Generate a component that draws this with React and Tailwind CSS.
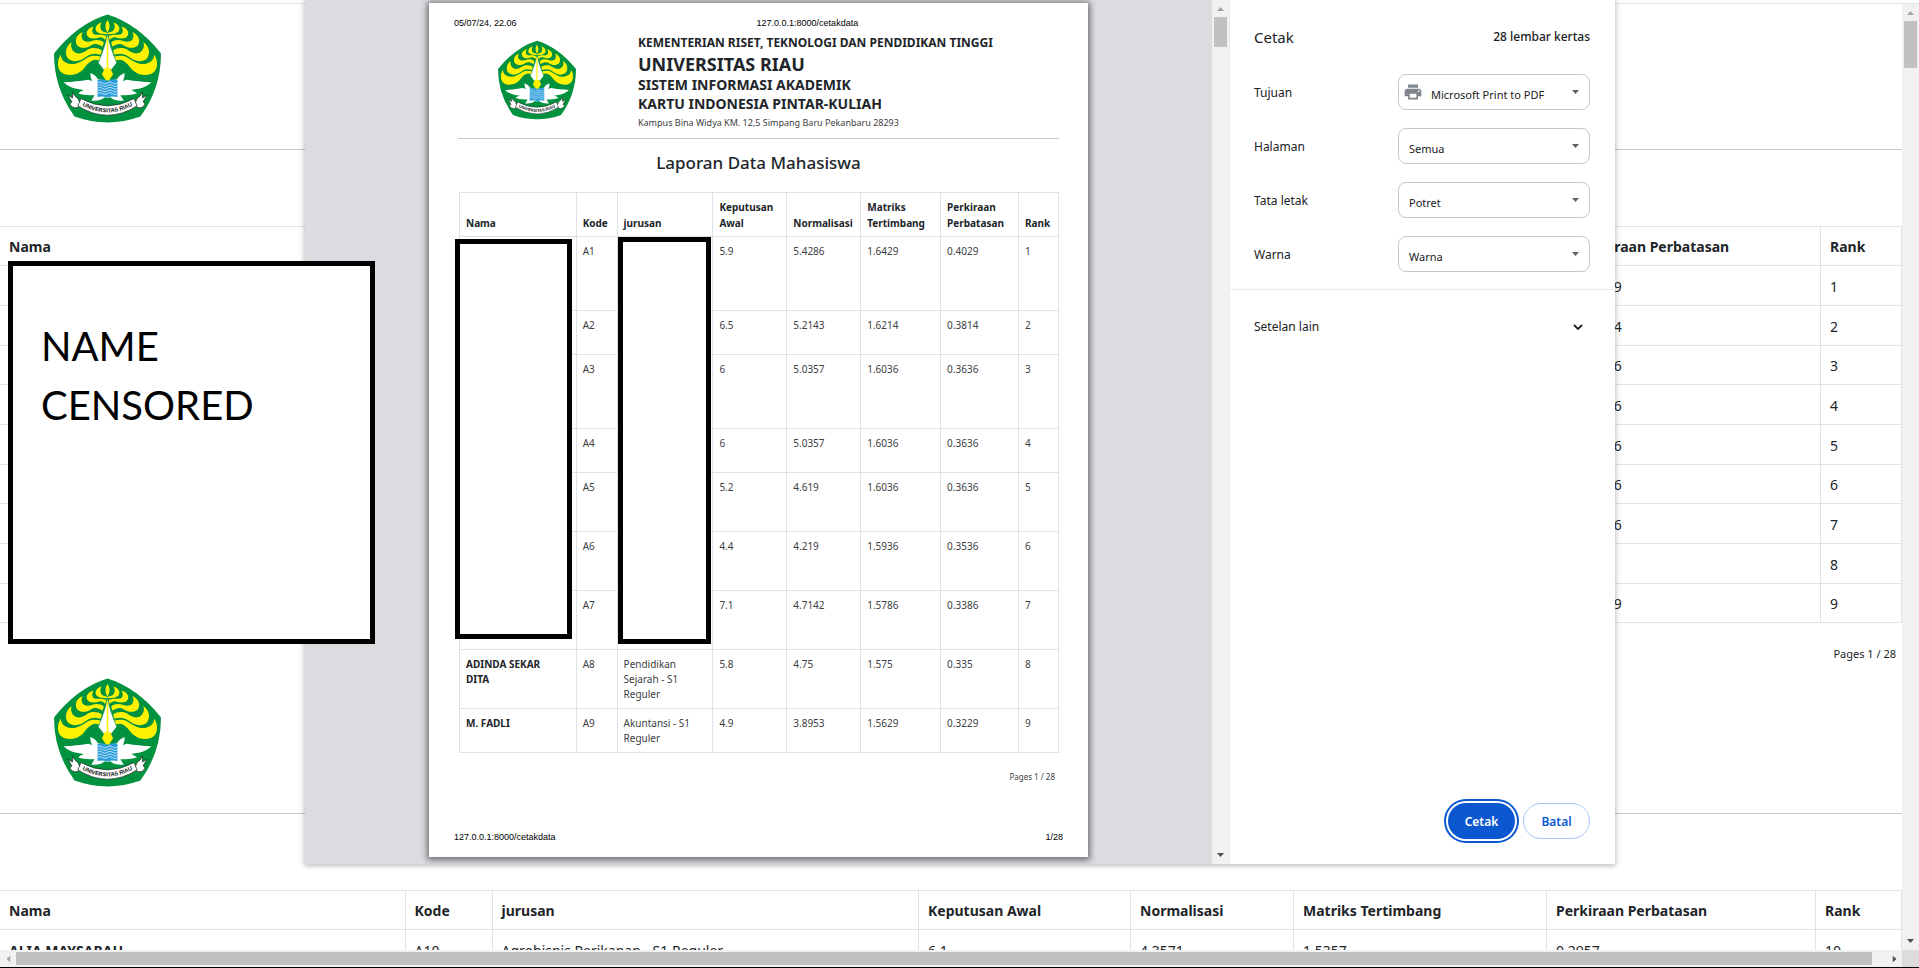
import { useId } from "react";
import { MdPrint } from "react-icons/md";

const students = [
  { kode: "A1", awal: "5.9", normal: "5.4286", matriks: "1.6429", batas: "0.4029", rank: 1, size: "h-[74px]" },
  { kode: "A2", awal: "6.5", normal: "5.2143", matriks: "1.6214", batas: "0.3814", rank: 2, size: "h-[44px]" },
  { kode: "A3", awal: "6", normal: "5.0357", matriks: "1.6036", batas: "0.3636", rank: 3, size: "h-[74px]" },
  { kode: "A4", awal: "6", normal: "5.0357", matriks: "1.6036", batas: "0.3636", rank: 4, size: "h-[44px]" },
  { kode: "A5", awal: "5.2", normal: "4.619", matriks: "1.6036", batas: "0.3636", rank: 5, size: "h-[59px]" },
  { kode: "A6", awal: "4.4", normal: "4.219", matriks: "1.5936", batas: "0.3536", rank: 6, size: "h-[59px]" },
  { kode: "A7", awal: "7.1", normal: "4.7142", matriks: "1.5786", batas: "0.3386", rank: 7, size: "h-[59px]" },
  { nama: "ADINDA SEKAR DITA", kode: "A8", jurusan: "Pendidikan Sejarah - S1 Reguler", awal: "5.8", normal: "4.75", matriks: "1.575", batas: "0.335", rank: 8, size: "h-[59px]" },
  { nama: "M. FADLI", kode: "A9", jurusan: "Akuntansi - S1 Reguler", awal: "4.9", normal: "3.8953", matriks: "1.5629", batas: "0.3229", rank: 9, size: "h-[44px]" },
];

const nextStudents = [
  { nama: "ALIA MAYSARAH", kode: "A10", jurusan: "Agrobisnis Perikanan - S1 Reguler", awal: "6.1", normal: "4.3571", matriks: "1.5357", batas: "0.2957", rank: 10 },
];

const headings = ["Nama", "Kode", "jurusan", "Keputusan Awal", "Normalisasi", "Matriks Tertimbang", "Perkiraan Perbatasan", "Rank"];

// The dialog covers the middle columns of the first table, so only the outer ones are filled.
const outerHeadings = headings.map((h, i) => (i === 0 || i > 5 ? h : ""));
const outerRows = students.map(({ batas, rank }) => ({ batas, rank }));

function LeafSide() {
  return (
    <g fill="#fff200">
      <path d="M181 163 C168 180 168 208 186 220 C204 230 232 224 246 210 C258 196 268 180 285 179 L300 182 L302 170 C286 166 272 166 260 173 C244 183 226 196 206 191 C190 187 180 178 181 163Z" />
      <path d="M213 126 C196 138 190 162 203 176 C215 187 238 185 250 175 C262 165 276 156 300 164 L304 151 C290 142 272 142 260 150 C246 160 232 164 222 156 C213 150 209 138 213 126Z" />
      <path d="M247 96 C228 103 220 122 230 136 C240 147 260 144 270 137 C280 130 292 130 306 140 L310 127 C298 118 284 119 274 123 C262 127 250 126 245 117 C242 110 242 102 247 96Z" />
      <path d="M279 79 C262 83 254 97 261 108 C268 118 284 116 293 113 C302 110 308 112 314 120 L318 108 C306 102 294 104 286 104 C276 103 271 93 279 79Z" />
      <path d="M304 66 C288 71 281 84 288 94 C296 102 310 101 321 103 L321 98 C310 96 303 94 301 87 C298 80 299 73 304 66Z" />
    </g>
  );
}

function WingSide() {
  return (
    <g>
      <path
        fill="#fff"
        d="M189 247 C215 245 240 243 262 239 C268 240 273 242 275 245 C272 236 268 228 270 219 C280 224 288 228 292 238 L308 241 L321 243 L321 294 L312 292 C306 300 290 304 272 302 C276 296 279 291 282 286 C266 286 248 286 232 280 C238 276 243 273 250 270 C226 268 204 262 189 247Z"
      />
      <path
        fill="#fff"
        stroke="#231f20"
        strokeWidth="2"
        strokeLinejoin="round"
        d="M216 276 C220 286 226 292 232 296 L238 310 L232 322 C222 326 212 322 208 312 L214 306 L202 286 L216 294Z"
      />
    </g>
  );
}

function Crest({ className }) {
  const id = useId();
  return (
    <svg viewBox="160 43 322 325" className={className} role="img" aria-label="Universitas Riau">
      <path fill="#00923f" d="M321 43 Q410 70 482 160 Q482 265 420 350 Q321 386 222 350 Q160 265 160 160 Q232 70 321 43Z" />
      <LeafSide />
      <g transform="matrix(-1 0 0 1 642 0)">
        <LeafSide />
      </g>
      <path fill="#fff200" d="M321 60 C329 70 329 86 321 97 C313 86 313 70 321 60Z" />
      <path fill="#fff" stroke="#00923f" strokeWidth="2" d="M321 100 C318 122 306 158 293 188 L309 209 H333 L349 188 C336 158 324 122 321 100Z" />
      <path stroke="#fff200" strokeWidth="5" d="M321 112 V210" />
      <WingSide />
      <g transform="matrix(-1 0 0 1 642 0)">
        <WingSide />
      </g>
      <path fill="#fff200" d="M311 205 H331 L333 213 L338 223 L330 235 L326 241 H316 L312 235 L304 223 L309 213Z" />
      <path fill="#2a9ddb" d="M291 240 Q306 236 314 241 L321 243 L328 241 Q336 236 351 240 V291 Q336 287 321 293 Q306 287 291 291Z" />
      <g fill="none" stroke="#fff" strokeWidth="2">
        <path d="M291 249 q7.500 -6 15 0 t15 0 t15 0 t15 0" />
        <path d="M291 257 q7.500 -6 15 0 t15 0 t15 0 t15 0" />
        <path d="M291 265 q7.500 -6 15 0 t15 0 t15 0 t15 0" />
        <path d="M291 273 q7.500 -6 15 0 t15 0 t15 0 t15 0" />
        <path d="M291 281 q7.500 -6 15 0 t15 0 t15 0 t15 0" />
      </g>
      <path fill="#fff200" d="M315 234 H327 L325 241 H317Z" />
      <path fill="#fff" stroke="#231f20" strokeWidth="2" d="M241 296 Q321 340 401 296 L410 318 Q321 374 232 318Z" />
      <path id={id} fill="none" d="M242 315 Q321 360 400 315" />
      <text fill="#111" fontFamily="Liberation Sans, sans-serif" fontWeight="700" fontSize="17" textAnchor="middle">
        <textPath href={"#" + id} startOffset="50%">UNIVERSITAS RIAU</textPath>
      </text>
    </svg>
  );
}

function ArrowMark({ className }) {
  return (
    <svg viewBox="0 0 7 4" className={className} aria-hidden="true">
      <path fill="currentColor" d="M0 4 L3.500 0 L7 4Z" />
    </svg>
  );
}

function WideTable({ titles, rows, cols }) {
  return (
    <table className="w-full table-fixed border-collapse text-left text-sm text-[#212529] [&_td]:border [&_td]:border-[#dee2e6] [&_td]:px-[9px] [&_td]:pt-[2px] [&_th]:border [&_th]:border-[#dee2e6] [&_th]:px-[9px] [&_th]:pt-[2px] [&_tr>*:first-child]:border-l-0">
      <colgroup>
        {cols.map((c, i) => (
          <col key={i} className={c} />
        ))}
      </colgroup>
      <thead>
        <tr className="h-[39px]">
          {titles.map((h, i) => (
            <th key={i} scope="col">{h}</th>
          ))}
        </tr>
      </thead>
      <tbody className="[&>tr]:h-10 [&>tr:nth-child(3n)]:h-[39px]">
        {rows.map((r) => (
          <tr key={r.rank}>
            <th scope="row">{r.nama}</th>
            <td>{r.kode}</td>
            <td>{r.jurusan}</td>
            <td>{r.awal}</td>
            <td>{r.normal}</td>
            <td>{r.matriks}</td>
            <td>{r.batas}</td>
            <td>{r.rank}</td>
          </tr>
        ))}
      </tbody>
    </table>
  );
}

function ReportSection({ titles, rows, cols, pages }) {
  return (
    <section className="pt-[10px]">
      <Crest className="ml-[54px] h-[109px] w-[107px]" />
      <hr className="mt-[26px] mb-[76px] border-[#c8c9ca]" />
      <WideTable titles={titles} rows={rows} cols={cols} />
      {pages && <p className="mt-[22px] mb-[5px] pr-[6px] text-right text-[11px] leading-[18px]">{pages}</p>}
    </section>
  );
}

function PreviewSheet() {
  return (
    <article className="relative flex w-[659px] flex-col bg-white px-[25px] text-[10px] text-[#3c4043] shadow-[0_1px_6px_2px_rgba(0,0,0,0.5)]">
      <div className="flex gap-60 pt-[14px] font-['Liberation_Sans',sans-serif] text-[9px] leading-3 text-black">
        <span>05/07/24, 22.06</span>
        <span>127.0.0.1:8000/cetakdata</span>
      </div>
      <header className="mx-1 flex items-start border-b border-[#c8c9ca] pb-[6px] text-[#212529]">
        <Crest className="mt-[11px] mr-[62px] ml-10 h-20 w-[78px]" />
        <div className="pt-1">
          <p className="text-xs leading-5 font-bold">KEMENTERIAN RISET, TEKNOLOGI DAN PENDIDIKAN TINGGI</p>
          <p className="text-lg leading-[22px] font-bold">UNIVERSITAS RIAU</p>
          <p className="text-sm leading-[19px] font-bold">SISTEM INFORMASI AKADEMIK</p>
          <p className="text-sm leading-[19px] font-bold">KARTU INDONESIA PINTAR-KULIAH</p>
          <p className="pt-px text-[9px] leading-[18px] text-[#3c4043]">Kampus Bina Widya KM. 12,5 Simpang Baru Pekanbaru 28293</p>
        </div>
      </header>
      <h1 className="pt-3 pb-[17px] text-center text-[17px] leading-6 font-medium text-[#212529]">Laporan Data Mahasiswa</h1>
      <table className="mr-1 ml-[5px] table-fixed border-collapse text-left leading-[15px] [&_td]:border [&_td]:border-[#dee2e6] [&_td]:pt-[7px] [&_td]:pr-1 [&_td]:pl-[6px] [&_td]:align-top [&_th]:border [&_th]:border-[#dee2e6] [&_th]:pl-[6px] [&_th]:text-[#212529]">
        <colgroup>
          <col className="w-[117px]" />
          <col className="w-[41px]" />
          <col className="w-24" />
          <col className="w-[74px]" />
          <col className="w-[74px]" />
          <col className="w-20" />
          <col className="w-[78px]" />
          <col className="w-10" />
        </colgroup>
        <thead>
          <tr className="h-[44px] leading-4 [&>th]:pb-[5px] [&>th]:align-bottom">
            {headings.map((h) => (
              <th key={h} scope="col">{h}</th>
            ))}
          </tr>
        </thead>
        <tbody>
          {students.map((r) => (
            <tr key={r.kode} className={r.size}>
              <th scope="row" className="pt-[7px] pr-5 align-top">{r.nama}</th>
              <td>{r.kode}</td>
              <td>{r.jurusan}</td>
              <td>{r.awal}</td>
              <td>{r.normal}</td>
              <td>{r.matriks}</td>
              <td>{r.batas}</td>
              <td>{r.rank}</td>
            </tr>
          ))}
        </tbody>
      </table>
      <p className="mt-4 pr-2 text-right text-[8px] leading-4">Pages 1 / 28</p>
      <footer className="mt-auto flex justify-between pb-[14px] font-['Liberation_Sans',sans-serif] text-[9px] leading-3 text-black">
        <span>127.0.0.1:8000/cetakdata</span>
        <span>1/28</span>
      </footer>
      <div className="absolute top-[236px] left-[26px] h-[400px] w-[117px] border-5 border-black bg-white" />
      <div className="absolute top-[234px] left-[189px] h-[407px] w-[93px] border-5 border-black bg-white" />
    </article>
  );
}

function Setting({ id, label, value, icon }) {
  return (
    <div className="flex items-center justify-between">
      <label htmlFor={id} className="pt-[2px]">{label}</label>
      <div className="relative w-48">
        {icon && <MdPrint className="absolute top-2 left-[5px] size-5 text-[#80868b]" />}
        <select
          id={id}
          defaultValue={value}
          className={
            "block h-9 w-full appearance-none rounded-lg border border-[#c7c7c7] bg-white pt-[6px] text-[11px] text-[#202124] " +
            (icon ? "pl-8" : "pl-[10px]")
          }
        >
          <option>{value}</option>
        </select>
        <ArrowMark className="pointer-events-none absolute top-4 right-[11px] h-1 w-[7px] rotate-180 text-[#5f6368]" />
      </div>
    </div>
  );
}

function PrintDialog() {
  return (
    <div
      role="dialog"
      aria-label="Cetak"
      className="absolute top-0 right-[304px] bottom-[103px] left-[305px] flex bg-white shadow-[0_1px_5px_1px_rgba(0,0,0,0.25)]"
    >
      <div className="flex min-w-0 flex-1 justify-center overflow-hidden bg-[#dadce0] pt-[3px] pb-[7px]">
        <PreviewSheet />
      </div>
      <div className="flex w-[17px] flex-col items-center bg-[#f1f1f1] py-[7px]">
        <ArrowMark className="h-1 w-[7px] text-[#a3a3a3]" />
        <div className="mt-[6px] h-[30px] w-[13px] bg-[#c1c1c1]" />
        <ArrowMark className="mt-auto h-1 w-[7px] rotate-180 text-[#505050]" />
      </div>
      <aside className="flex w-[386px] flex-col border-l border-[#e8eaed] text-xs text-[#202124]">
        <div className="flex items-center justify-between pt-[25px] pr-[25px] pb-[13px] pl-6 leading-6">
          <h2 className="text-[15px]">Cetak</h2>
          <span className="font-medium">28 lembar kertas</span>
        </div>
        <div className="flex flex-col gap-[18px] border-b border-[#e8eaed] pt-3 pr-[25px] pb-[17px] pl-6">
          <Setting id="tujuan" label="Tujuan" value="Microsoft Print to PDF" icon />
          <Setting id="halaman" label="Halaman" value="Semua" />
          <Setting id="tata" label="Tata letak" value="Potret" />
          <Setting id="warna" label="Warna" value="Warna" />
        </div>
        <button type="button" className="flex items-center justify-between pt-[25px] pr-[25px] pb-6 pl-6 leading-6">
          <span>Setelan lain</span>
          <svg viewBox="0 0 10 6" className="mr-[7px] h-[6px] w-[10px]" aria-hidden="true">
            <path d="M1 1 L5 5 L9 1" fill="none" stroke="currentColor" strokeWidth="1.800" />
          </svg>
        </button>
        <div className="mt-auto flex justify-end gap-2 pr-[25px] pb-[25px] pl-6 font-semibold">
          <button type="button" className="h-9 w-[67px] rounded-full bg-[#0b57d0] pt-[2px] text-white ring-2 ring-[#0b57d0] ring-offset-2">
            Cetak
          </button>
          <button type="button" className="h-9 w-[67px] rounded-full border border-[#a8c7fa] pt-[2px] text-[#0b57d0]">
            Batal
          </button>
        </div>
      </aside>
    </div>
  );
}

export default function App() {
  return (
    <div className="relative flex h-screen flex-col overflow-hidden border-b border-black bg-white font-['Noto_Sans',sans-serif] text-[#212529]">
      <div className="h-1 shrink-0 border-b border-[#dee2e6]" />
      <div className="flex min-h-0 flex-1">
        <main className="min-w-0 flex-1 overflow-hidden">
          <ReportSection
            titles={outerHeadings}
            rows={outerRows}
            cols={["w-[350px]", "w-[90px]", "", "w-[212px]", "w-[163px]", "w-[251px]", "w-[252px]", "w-[81px]"]}
            pages="Pages 1 / 28"
          />
          <ReportSection
            titles={headings}
            rows={nextStudents}
            cols={["w-[405px]", "w-[87px]", "", "w-[212px]", "w-[163px]", "w-[253px]", "w-[269px]", "w-[86px]"]}
          />
        </main>
        <div className="flex w-[17px] flex-col items-center bg-[#f1f1f1] py-[7px]">
          <ArrowMark className="h-1 w-[7px] text-[#a3a3a3]" />
          <div className="mt-[6px] h-[47px] w-[13px] bg-[#c1c1c1]" />
          <ArrowMark className="mt-auto h-1 w-[7px] rotate-180 text-[#505050]" />
        </div>
      </div>
      <div className="flex h-[17px] shrink-0 items-center bg-[#f1f1f1]">
        <div className="flex w-4 justify-center">
          <ArrowMark className="h-1 w-[7px] -rotate-90 text-[#a3a3a3]" />
        </div>
        <div className="h-[13px] flex-1 bg-[#c1c1c1]" />
        <div className="flex w-[30px] justify-end pr-1">
          <ArrowMark className="h-1 w-[7px] rotate-90 text-[#505050]" />
        </div>
        <div className="h-full w-[17px] bg-[#dcdcdc]" />
      </div>
      <PrintDialog />
      <div className="absolute top-[261px] left-2 h-[383px] w-[367px] border-5 border-black bg-white pt-[51px] pl-7 font-[Lato,sans-serif] text-[40px] leading-[59px] text-black">
        NAME
        <br />
        CENSORED
      </div>
    </div>
  );
}
